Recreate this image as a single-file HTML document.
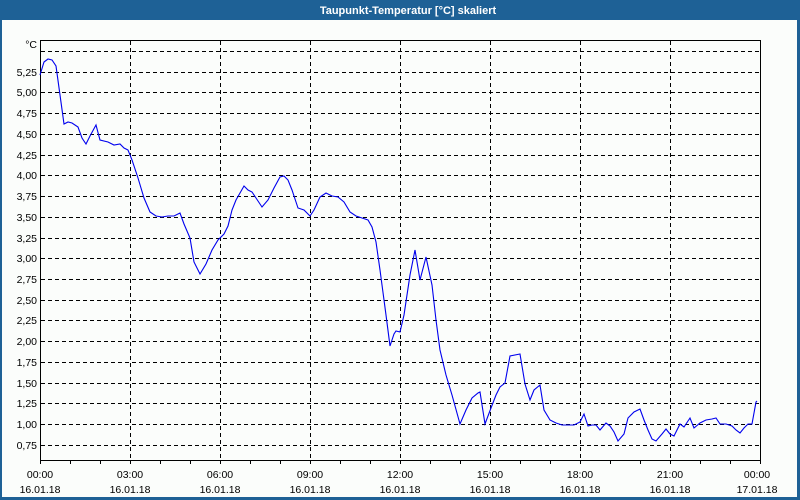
<!DOCTYPE html>
<html><head><style>
html,body{margin:0;padding:0;width:800px;height:500px;overflow:hidden;background:#fbfdfb}
svg{display:block}
text{font-family:"Liberation Sans",sans-serif;font-size:10.5px;fill:#000}
</style></head><body>
<svg width="800" height="500" xmlns="http://www.w3.org/2000/svg">
<rect x="0" y="0" width="800" height="500" fill="#1e6196"/>
<rect x="2" y="20" width="795" height="477" fill="#fbfdfb"/>
<text x="408" y="14" text-anchor="middle" style="font-weight:bold;fill:#fff;font-size:11px">Taupunkt-Temperatur [°C] skaliert</text>
<g stroke="#000" stroke-width="1" stroke-dasharray="4,3" shape-rendering="crispEdges">
<line x1="41" x2="760" y1="51.5" y2="51.5"/>
<line x1="41" x2="760" y1="72.5" y2="72.5"/>
<line x1="41" x2="760" y1="92.5" y2="92.5"/>
<line x1="41" x2="760" y1="113.5" y2="113.5"/>
<line x1="41" x2="760" y1="134.5" y2="134.5"/>
<line x1="41" x2="760" y1="155.5" y2="155.5"/>
<line x1="41" x2="760" y1="175.5" y2="175.5"/>
<line x1="41" x2="760" y1="196.5" y2="196.5"/>
<line x1="41" x2="760" y1="217.5" y2="217.5"/>
<line x1="41" x2="760" y1="238.5" y2="238.5"/>
<line x1="41" x2="760" y1="258.5" y2="258.5"/>
<line x1="41" x2="760" y1="279.5" y2="279.5"/>
<line x1="41" x2="760" y1="300.5" y2="300.5"/>
<line x1="41" x2="760" y1="320.5" y2="320.5"/>
<line x1="41" x2="760" y1="341.5" y2="341.5"/>
<line x1="41" x2="760" y1="362.5" y2="362.5"/>
<line x1="41" x2="760" y1="383.5" y2="383.5"/>
<line x1="41" x2="760" y1="403.5" y2="403.5"/>
<line x1="41" x2="760" y1="424.5" y2="424.5"/>
<line x1="41" x2="760" y1="445.5" y2="445.5"/>
<line x1="130.5" x2="130.5" y1="41" y2="460"/>
<line x1="220.5" x2="220.5" y1="41" y2="460"/>
<line x1="310.5" x2="310.5" y1="41" y2="460"/>
<line x1="400.5" x2="400.5" y1="41" y2="460"/>
<line x1="490.5" x2="490.5" y1="41" y2="460"/>
<line x1="580.5" x2="580.5" y1="41" y2="460"/>
<line x1="670.5" x2="670.5" y1="41" y2="460"/>
</g>
<g stroke="#000" stroke-width="1" shape-rendering="crispEdges" fill="none">
<polyline points="40.5,461 40.5,40.5 760.5,40.5 760.5,461"/>
<line x1="40" x2="761" y1="460.5" y2="460.5"/>
<path d="M40.5 460v4M70.5 460v4M100.5 460v4M130.5 460v4M160.5 460v4M190.5 460v4M220.5 460v4M250.5 460v4M280.5 460v4M310.5 460v4M340.5 460v4M370.5 460v4M400.5 460v4M430.5 460v4M460.5 460v4M490.5 460v4M520.5 460v4M550.5 460v4M580.5 460v4M610.5 460v4M640.5 460v4M670.5 460v4M700.5 460v4M730.5 460v4M760.5 460v4"/>
</g>
<polyline fill="none" stroke="#0000ee" stroke-width="1.1" points="40,75 44,62 48,59 52,60 56,66 60,95 64,124 68,122 72,123 78,127 82,138 86,144 90,136 96,125 100,140 108,142 114,145 120,144 124,148 128,150 132,160 138,178 144,198 150,212 156,216 162,217 168,216 174,216 180,213 184,224 190,238 194,262 200,274 206,264 212,250 218,240 224,234 228,226 232,210 236,200 240,193 244,186 248,190 252,192 256,198 262,207 268,200 274,188 280,177 284,176 288,180 292,190 298,208 304,210 310,216 314,210 320,197 326,193 332,196 338,197 344,202 350,212 356,216 362,218 368,220 372,227 376,242 380,270 386,315 390,346 394,334 396,331 400,332 404,315 410,275 415,250 420,280 426,257 432,285 436,320 440,350 446,375 452,395 460,424 466,410 472,398 478,393 480,392 485,424 491,408 496,395 500,387 505,383 510,356 520,354 525,384 530,400 534,390 540,385 544,410 550,420 556,423 562,425 568,425 574,425 580,422 584,414 588,426 592,425 596,425 600,430 606,423 610,426 614,432 618,441 624,434 628,418 634,412 640,409 644,420 648,430 652,439 656,441 662,434 666,429 670,434 674,436 680,424 684,427 690,418 694,428 700,423 706,420 712,419 716,418 720,424 726,424 732,426 736,430 740,433 744,428 748,424 752,424 756,402 757,401"/>
<g text-anchor="end">
<text x="37" y="48">°C</text>
<text x="37" y="76">5,25</text>
<text x="37" y="96">5,00</text>
<text x="37" y="117">4,75</text>
<text x="37" y="138">4,50</text>
<text x="37" y="159">4,25</text>
<text x="37" y="179">4,00</text>
<text x="37" y="200">3,75</text>
<text x="37" y="221">3,50</text>
<text x="37" y="242">3,25</text>
<text x="37" y="262">3,00</text>
<text x="37" y="283">2,75</text>
<text x="37" y="304">2,50</text>
<text x="37" y="324">2,25</text>
<text x="37" y="345">2,00</text>
<text x="37" y="366">1,75</text>
<text x="37" y="387">1,50</text>
<text x="37" y="407">1,25</text>
<text x="37" y="428">1,00</text>
<text x="37" y="449">0,75</text>
</g>
<g text-anchor="middle">
<text x="40" y="478">00:00</text><text x="40" y="493">16.01.18</text>
<text x="130" y="478">03:00</text><text x="130" y="493">16.01.18</text>
<text x="220" y="478">06:00</text><text x="220" y="493">16.01.18</text>
<text x="310" y="478">09:00</text><text x="310" y="493">16.01.18</text>
<text x="400" y="478">12:00</text><text x="400" y="493">16.01.18</text>
<text x="490" y="478">15:00</text><text x="490" y="493">16.01.18</text>
<text x="580" y="478">18:00</text><text x="580" y="493">16.01.18</text>
<text x="670" y="478">21:00</text><text x="670" y="493">16.01.18</text>
<text x="757" y="478">00:00</text><text x="757" y="493">17.01.18</text>
</g>
</svg>
</body></html>
